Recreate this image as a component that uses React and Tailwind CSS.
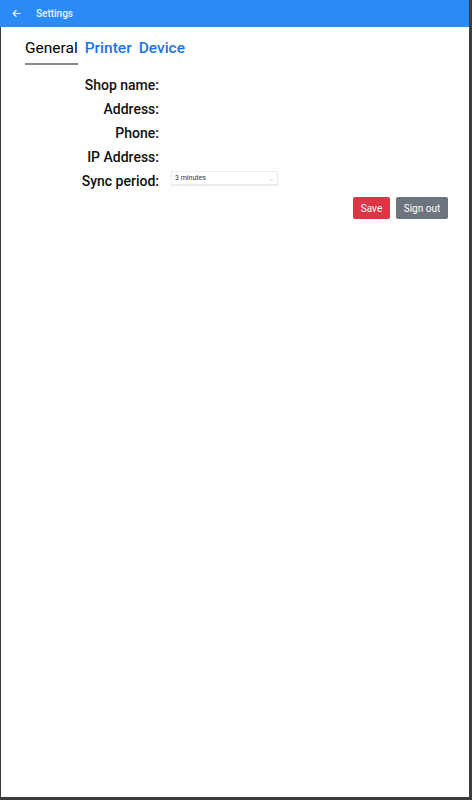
import React, { useState } from 'react';

function App() {
  const [tab, setTab] = useState('General');
  const [period, setPeriod] = useState('3 minutes');

  const labels = ['Shop name:', 'Address:', 'Phone:', 'IP Address:'];

  return (
    <div className="w-[472px] h-[800px] bg-[#3c3c3c] flex flex-col" style={{ fontFamily: 'Roboto, "Noto Sans", sans-serif' }}>
      {/* Top bar */}
      <div className="h-[27px] mr-[3px] bg-[#2a8af6] flex items-center text-white shrink-0">
        <svg className="ml-[12px]" width="9" height="9" viewBox="0 0 16 16" fill="none" stroke="white" strokeWidth="2.2">
          <path d="M15 8H2M8 2L2 8l6 6" />
        </svg>
        <span className="ml-[15px] text-[10px] font-medium text-white/90">Settings</span>
      </div>

      {/* Body */}
      <div className="flex-1 ml-px mr-[3px] mb-[3px] bg-white pl-6 pr-[21px]">
        {/* Tabs */}
        <div className="flex items-end gap-[7px] pt-[11px]">
          {['General', 'Printer', 'Device'].map(t => (
            <button
              key={t}
              onClick={() => setTab(t)}
              className={`text-[15.5px] leading-[20px] pb-[5px] border-b-2 ${
                tab === t ? 'text-black border-[#888]' : 'text-[#1a73e8] font-medium border-transparent'
              }`}
            >
              {t}
            </button>
          ))}
        </div>

        {/* Form */}
        <div className="mt-[8px] flex flex-col">
          {labels.map(l => (
            <div key={l} className="flex items-center h-[24px]">
              <span className="w-[134px] text-right text-[14px] font-medium text-[#111]">{l}</span>
            </div>
          ))}
          <div className="flex items-center h-[24px]">
            <span className="w-[134px] text-right text-[14px] font-medium text-[#111]">Sync period:</span>
            <div className="ml-[12px] w-[107px] h-[14px] mt-[-6px] flex items-center justify-between px-[3px] border border-[#eee] shadow-[0_1px_1px_rgba(0,0,0,0.08)] text-[7px] text-[#333]">
              <span>{period}</span>
              <span className="text-[#bbb] text-[6px]">⌄</span>
            </div>
          </div>
        </div>

        {/* Buttons */}
        <div className="flex justify-end gap-[6px] mt-[4px]">
          <button onClick={() => setPeriod('3 minutes')} className="w-[37px] h-[22px] rounded-[2px] bg-[#dc3545] text-white text-[10px]">Save</button>
          <button className="w-[52px] h-[22px] rounded-[2px] bg-[#6c757d] text-white text-[10px]">Sign out</button>
        </div>
      </div>
    </div>
  );
}

export default App;
